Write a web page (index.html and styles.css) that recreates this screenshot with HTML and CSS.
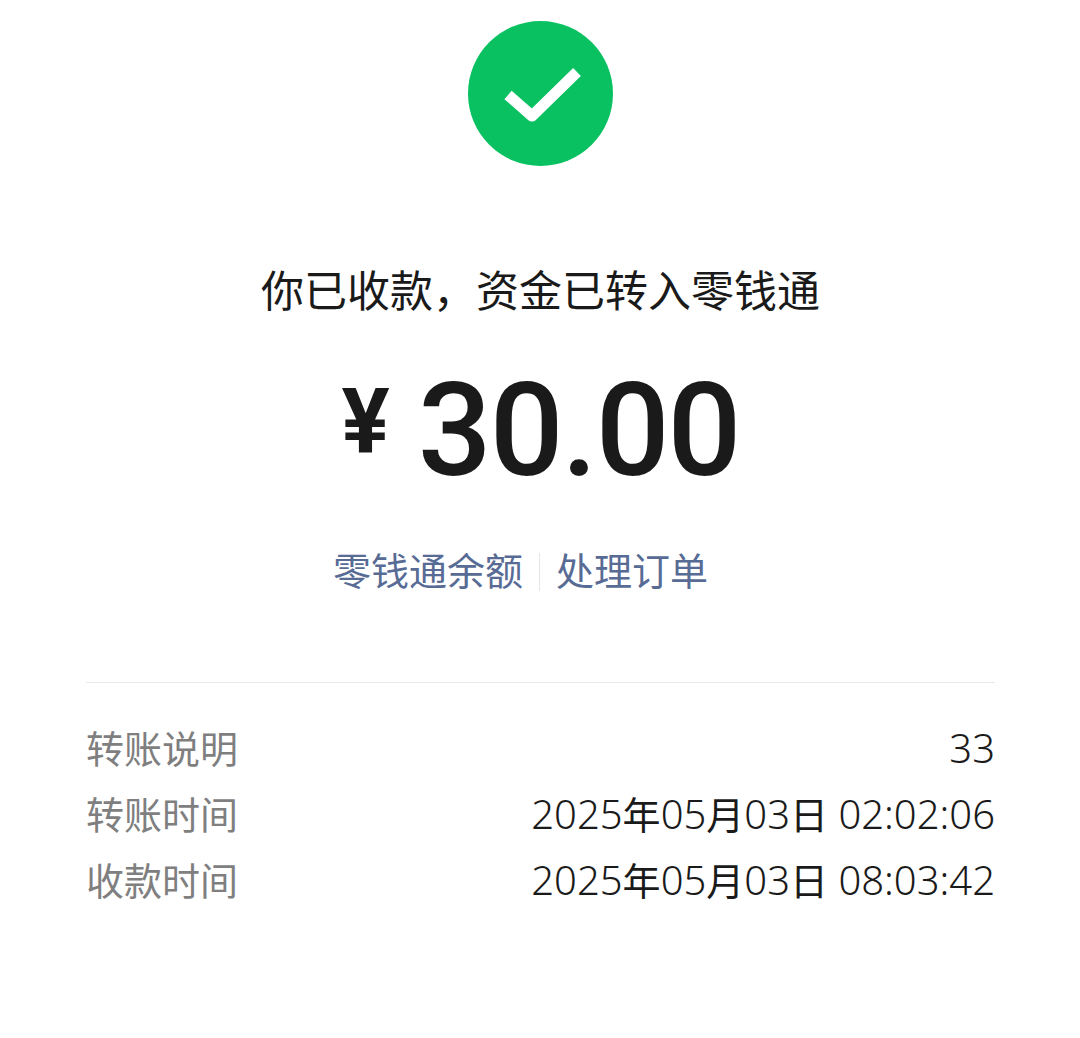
FILE: index.html
```html
<!DOCTYPE html>
<html lang="zh">
<head>
    <meta charset="UTF-8">
    <title>转账详情</title>
    <link rel="stylesheet" href="styles.css">
</head>
<body>
    <div class="top">
        <svg class="ok" width="145" height="145" viewBox="0 0 145 145">
            <circle cx="72.5" cy="72.5" r="72.5" fill="#0ac161"/>
            <path d="M40 74 L64 95 L109 51" fill="none" stroke="#fff" stroke-width="11" stroke-linejoin="round"/>
        </svg>
        <div class="title">你已收款，资金已转入零钱通</div>
        <div class="amount"><span class="yen">¥</span><span class="num">30.00</span></div>
        <div class="links">
            <a class="link first">零钱通余额</a><a class="link">处理订单</a>
        </div>
    </div>
    <div class="info">
        <div class="row"><span class="label">转账说明</span><span class="value">33</span></div>
        <div class="row"><span class="label">转账时间</span><span class="value">2025<span class="unit">年</span>05<span class="unit">月</span>03<span class="unit">日</span> 02:02:06</span></div>
        <div class="row"><span class="label">收款时间</span><span class="value">2025<span class="unit">年</span>05<span class="unit">月</span>03<span class="unit">日</span> 08:03:42</span></div>
    </div>
</body>
</html>
```

FILE: styles.css
```css
body {
    margin: 0;
    background-color: #fff;
    color: #1a1a1a;
    font-family: "Roboto", "Noto Sans CJK SC", sans-serif;
}

.top {
    display: flex;
    flex-direction: column;
    align-items: center;
    padding: 21px 0 0 1px;
}

.ok {
    display: block;
}

.title {
    margin-top: 98px;
    font-size: 43px;
    line-height: 56px;
}

.amount {
    margin-top: 46px;
    display: flex;
    align-items: flex-start;
    line-height: 130px;
}

.yen {
    font-size: 90px;
    font-weight: 700;
    line-height: 114px;
    margin-right: 28px;
}

.num {
    font-size: 130px;
    font-weight: 500;
    letter-spacing: -2px;
}

.links {
    margin: 57px 40px 0 0;
    display: flex;
    font-size: 38px;
    line-height: 38px;
    color: #576b95;
}

.link.first {
    padding-right: 16px;
    margin-right: 16px;
    border-right: 1px solid #e5e5e5;
}

.info {
    margin: 91px 85px 0 86px;
    padding-top: 34px;
    border-top: 1px solid #e8e8e8;
}

.row {
    display: flex;
    justify-content: space-between;
    line-height: 66px;
}

.label {
    font-size: 38px;
    color: #7f7f7f;
}

.value {
    margin-top: -2px;
    font-family: "Noto Sans", "Noto Sans CJK SC", sans-serif;
    font-size: 40px;
    font-weight: 350;
}

.unit {
    font-size: 38px;
    font-weight: 400;
}
```
